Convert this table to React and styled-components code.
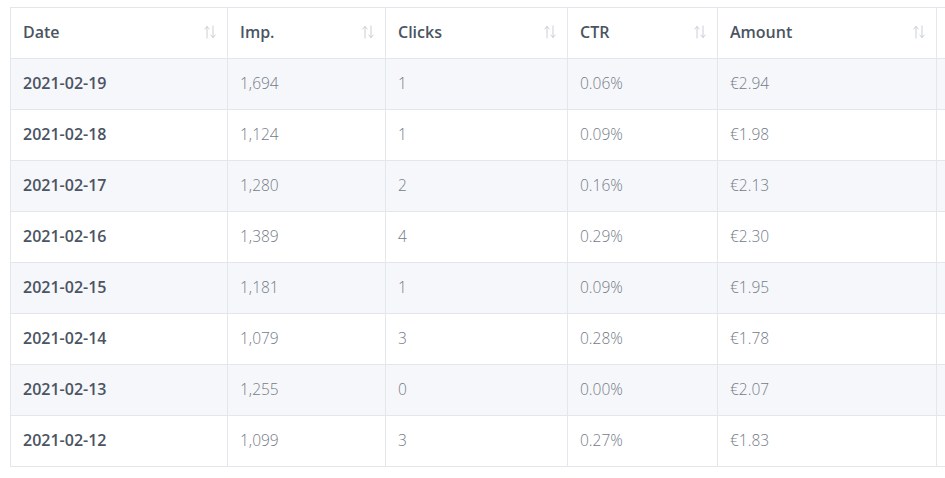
import styled, { createGlobalStyle } from "styled-components";

const GlobalStyle = createGlobalStyle`
  body {
    margin: 0;
    background: #ffffff;
    font-family: "Open Sans", "Liberation Sans", sans-serif;
  }
`;

const rows = [
  ["2021-02-19", "1,694", "1", "0.06%", "€2.94"],
  ["2021-02-18", "1,124", "1", "0.09%", "€1.98"],
  ["2021-02-17", "1,280", "2", "0.16%", "€2.13"],
  ["2021-02-16", "1,389", "4", "0.29%", "€2.30"],
  ["2021-02-15", "1,181", "1", "0.09%", "€1.95"],
  ["2021-02-14", "1,079", "3", "0.28%", "€1.78"],
  ["2021-02-13", "1,255", "0", "0.00%", "€2.07"],
  ["2021-02-12", "1,099", "3", "0.27%", "€1.83"],
];

const columns = [
  { label: "Date", width: 217 },
  { label: "Imp.", width: 158 },
  { label: "Clicks", width: 182 },
  { label: "CTR", width: 150 },
  { label: "Amount", width: 219 },
];

function SortIcon() {
  return (
    <svg width="14" height="16" viewBox="0 0 14 16" fill="none">
      <g stroke="#c9ced6" strokeWidth="1" strokeLinecap="round">
        <path d="M4 2.5 V14" />
        <path d="M1.8 5 L4 2.5 L6.2 5" />
        <path d="M10 2 V13.5" />
        <path d="M7.8 11 L10 13.5 L12.2 11" />
      </g>
    </svg>
  );
}

export default function App() {
  return (
    <>
      <GlobalStyle />
      <Page>
        <Scroller>
          <Table>
            <colgroup>
              {columns.map((c) => (
                <col key={c.label} style={{ width: c.width }} />
              ))}
              <col style={{ width: 120 }} />
            </colgroup>
            <thead>
              <tr>
                {columns.map((c) => (
                  <Th key={c.label}>
                    <HeadInner>
                      <span>{c.label}</span>
                      <SortIcon />
                    </HeadInner>
                  </Th>
                ))}
                <Th />
              </tr>
            </thead>
            <tbody>
              {rows.map((r, i) => (
                <Row key={r[0]} $striped={i % 2 === 0}>
                  {r.map((v, j) => (
                    <Td key={j} $strong={j === 0}>
                      {v}
                    </Td>
                  ))}
                  <Td />
                </Row>
              ))}
            </tbody>
          </Table>
        </Scroller>
      </Page>
    </>
  );
}

const Page = styled.div`
  width: 945px;
  height: 478px;
  padding: 7px 0 0 10px;
  box-sizing: border-box;
  overflow: hidden;
`;

const Scroller = styled.div`
  width: 935px;
  overflow: hidden;
`;

const Table = styled.table`
  border-collapse: collapse;
  table-layout: fixed;
  width: 1046px;
  color: #4b5563;
`;

const Th = styled.th`
  height: 51px;
  padding: 0 10px 2px 12px;
  border: 1px solid #e3e6eb;
  text-align: left;
  font-size: 16px;
  font-weight: 600;
  color: #4a5462;
  background: #ffffff;
  box-sizing: border-box;
`;

const HeadInner = styled.div`
  display: flex;
  align-items: center;
  justify-content: space-between;
`;

const Row = styled.tr`
  background: ${(p) => (p.$striped ? "#f6f7fa" : "#ffffff")};
`;

const Td = styled.td`
  height: 51px;
  padding: 0 12px 2px;
  border: 1px solid #e3e6eb;
  font-size: ${(p) => (p.$strong ? "16px" : "15.5px")};
  font-weight: ${(p) => (p.$strong ? 600 : 300)};
  color: ${(p) => (p.$strong ? "#4a5462" : "#737b87")};
  box-sizing: border-box;
`;
